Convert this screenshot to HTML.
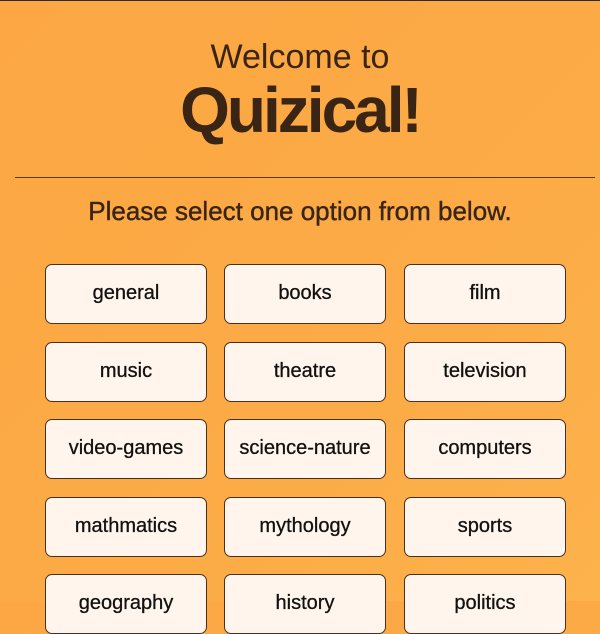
<!DOCTYPE html>
<html><head><style>
html,body{margin:0;padding:0}
body{width:600px;height:601px;overflow:hidden;background:linear-gradient(135deg,#fca743 0%,#fcab46 60%,#fdb24c 100%);font-family:"Liberation Sans",sans-serif;position:relative}
.top{position:absolute;top:0;left:0;width:600px;height:1px;background:#2b2b2b}
.t1{position:absolute;top:37px;left:0;width:600px;text-align:center;font-size:34px;color:#3a2414;line-height:40px}
.t2{position:absolute;top:73px;left:0;width:600px;text-align:center;font-size:64px;font-weight:bold;color:#3a2414;line-height:74px;letter-spacing:-3px}
.hr{position:absolute;top:177px;left:15px;width:580px;height:1px;background:#5a3a1e}
.sub{position:absolute;top:196px;left:0;width:600px;text-align:center;font-size:26px;color:#3a2414;line-height:30px;-webkit-text-stroke:0.4px #3a2414}
.b{position:absolute;width:160px;height:58px;background:#fff5ec;border:1px solid #4a3020;border-radius:7px;text-align:center;line-height:56px;font-size:20px;color:#111;-webkit-text-stroke:0.3px #111}
</style></head><body>
<div class="top"></div>
<div class="t1">Welcome to</div>
<div class="t2">Quizical!</div>
<div class="hr"></div>
<div class="sub">Please select one option from below.</div>
<div class="b" style="left:45px;top:264px">general</div>
<div class="b" style="left:224px;top:264px">books</div>
<div class="b" style="left:404px;top:264px">film</div>
<div class="b" style="left:45px;top:342px">music</div>
<div class="b" style="left:224px;top:342px">theatre</div>
<div class="b" style="left:404px;top:342px">television</div>
<div class="b" style="left:45px;top:419px">video-games</div>
<div class="b" style="left:224px;top:419px">science-nature</div>
<div class="b" style="left:404px;top:419px">computers</div>
<div class="b" style="left:45px;top:497px">mathmatics</div>
<div class="b" style="left:224px;top:497px">mythology</div>
<div class="b" style="left:404px;top:497px">sports</div>
<div class="b" style="left:45px;top:574px">geography</div>
<div class="b" style="left:224px;top:574px">history</div>
<div class="b" style="left:404px;top:574px">politics</div>
</body></html>
